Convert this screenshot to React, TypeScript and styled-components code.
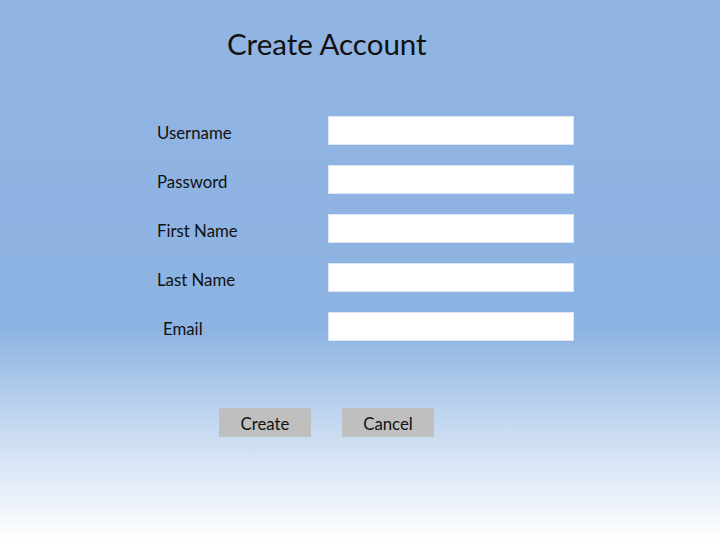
import React from "react";
import styled, { createGlobalStyle } from "styled-components";

const GlobalStyle = createGlobalStyle`
  html, body {
    margin: 0;
    padding: 0;
  }
  body {
    font-family: "Lato", "Open Sans", sans-serif;
    color: #111;
  }
`;

const Page = styled.div`
  width: 720px;
  height: 540px;
  box-sizing: border-box;
  padding-top: 25px;
  background: linear-gradient(
    to bottom,
    #91b5e3 0%,
    #8db3e2 61%,
    #c6d9f1 79%,
    #ffffff 100%
  );
  overflow: hidden;
`;

const Title = styled.h1`
  margin: 0 0 0 227px;
  font-size: 29.5px;
  font-weight: 400;
  line-height: 37px;
`;

const Form = styled.div`
  display: grid;
  grid-template-columns: 171px 246px;
  row-gap: 20px;
  margin: 54px 0 0 157px;
`;

const Label = styled.label<{ indent?: number }>`
  display: flex;
  align-items: center;
  padding-top: 3px;
  padding-left: ${(props) => props.indent || 0}px;
  font-size: 16.8px;
`;

const Field = styled.input`
  box-sizing: border-box;
  height: 29px;
  width: 246px;
  margin: 0;
  border: 1px solid #dbe5f3;
  background: #fff;
  outline: none;
`;

const Buttons = styled.div`
  display: flex;
  gap: 31px;
  margin: 67px 0 0 219px;
`;

const Button = styled.button`
  width: 92px;
  height: 29px;
  padding: 0;
  padding-top: 2px;
  border: none;
  background: #bfbfbf;
  font-family: "Lato", "Open Sans", sans-serif;
  font-size: 16.8px;
  color: #111;
  cursor: pointer;
`;

const fields = [
  { label: "Username", type: "text" },
  { label: "Password", type: "password" },
  { label: "First Name", type: "text" },
  { label: "Last Name", type: "text" },
  { label: "Email", type: "email", indent: 6 },
];

function App() {
  return (
    <>
      <GlobalStyle />
      <Page>
        <Title>Create Account</Title>
        <Form>
          {fields.map((f) => (
            <React.Fragment key={f.label}>
              <Label indent={f.indent}>{f.label}</Label>
              <Field type={f.type} />
            </React.Fragment>
          ))}
        </Form>
        <Buttons>
          <Button>Create</Button>
          <Button>Cancel</Button>
        </Buttons>
      </Page>
    </>
  );
}

export default App;
